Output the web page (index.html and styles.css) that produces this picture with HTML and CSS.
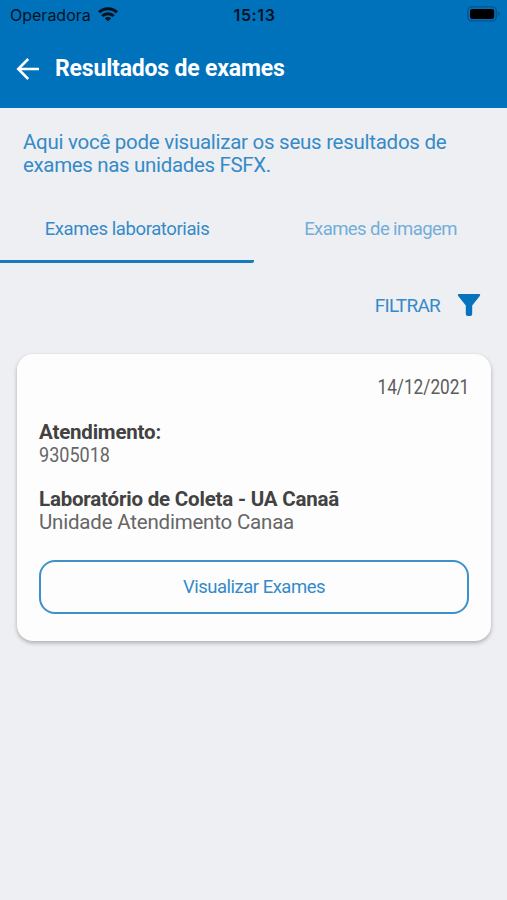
FILE: index.html
```html
<!DOCTYPE html>
<html lang="pt-BR">
<head>
<meta charset="utf-8">
<title>Resultados de exames</title>
<link rel="stylesheet" href="styles.css">
</head>
<body>
<header class="header">
  <div class="status">
    <div class="carrier"><span class="carrier-name">Operadora</span>
      <svg class="wifi" width="20" height="15" viewBox="0 0 20 15" fill="none" stroke="#03121f" stroke-width="3"><path d="M1 5.4a13 13 0 0 1 18 0M4.2 9a8.4 8.4 0 0 1 11.6 0"/><path d="M10 14.3 6.8 11.4a4.6 4.6 0 0 1 6.4 0Z" fill="#03121f" stroke="none"/></svg>
    </div>
    <time class="clock">15:13</time>
    <svg class="battery" width="34" height="16" viewBox="0 0 34 16"><rect x=".9" y=".9" width="28.4" height="14" rx="4" fill="none" stroke="#07538a" stroke-width="1.4"/><rect x="3" y="3" width="24.2" height="10" rx="2.2" fill="#000"/><path d="M31 5.5c2 .6 2 4.4 0 5z" fill="#07538a"/></svg>
  </div>
  <div class="titlebar">
    <svg width="24" height="24" viewBox="0 0 24 24" fill="none" stroke="#fff" stroke-width="2.5"><path d="M23 12H2.5M12.2 2 2.2 12l10 10"/></svg>
    <h1 class="title">Resultados de exames</h1>
  </div>
</header>
<main>
  <p class="intro"><span class="intro-a">Aqui você pode visualizar os seus resultados de</span><br><span class="intro-b">exames nas unidades FSFX.</span></p>
  <nav class="tabs">
    <div class="tab active"><span class="tab-a">Exames laboratoriais</span></div>
    <div class="tab"><span class="tab-b">Exames de imagem</span></div>
  </nav>
  <div class="filter"><span class="filter-label">FILTRAR</span>
    <svg width="24" height="24" viewBox="0 0 24 24" fill="#0873bd"><path d="M2 1H22Q24 1.4 22.6 3.2L15.2 12.6V21Q15.2 23 13.2 23H10.8Q8.8 23 8.8 21V12.6L1.4 3.2Q0 1.4 2 1Z"/></svg>
  </div>
  <section class="card">
    <time class="date">14/12/2021</time>
    <h2 class="label">Atendimento:</h2>
    <p class="value number">9305018</p>
    <h2 class="label">Laboratório de Coleta - UA Canaã</h2>
    <p class="value">Unidade Atendimento Canaa</p>
    <button class="button">Visualizar Exames</button>
  </section>
</main>
</body>
</html>
```
FILE: styles.css
```css
* { box-sizing: border-box; }
body { margin: 0; width: 507px; height: 900px; overflow: hidden; background: #eeeff3; color: #666; font-family: Roboto, sans-serif; white-space: nowrap; }
h1, h2, p { margin: 0; }
svg { display: block; flex: none; }
.header { height: 108px; background: #0072bc; }
.status { height: 30px; display: grid; grid-template-columns: 1fr auto 1fr; align-items: center; padding: 0 6px 0 8px; color: #03121f; font-family: Inter, sans-serif; }
.carrier { display: flex; align-items: center; gap: 7px; padding-left: 2px; font-size: 16px; }
.wifi { margin-bottom: 2px; }
.clock { font-size: 16px; font-weight: 600; letter-spacing: .6px; }
.battery { justify-self: end; margin-bottom: 2px; }
.titlebar { height: 77px; display: flex; align-items: center; gap: 15px; padding-left: 16px; color: #fff; }
.title { padding-top: 1px; font-size: 23px; line-height: 28px; font-weight: 700; letter-spacing: -.18px; }
.intro { padding: 23px 0 0 23px; font-size: 20.5px; line-height: 23px; color: #358ac7; }
.intro-a { letter-spacing: -.27px; }
.intro-b { letter-spacing: -.34px; }
.tabs { display: grid; grid-template-columns: 254px 253px; height: 70px; margin-top: 16px; }
.tab { height: 70px; padding-top: 24px; border-bottom: 3px solid transparent; text-align: center; font-size: 18.5px; line-height: 24px; color: #72aed8; }
.active { color: #358ac7; border-bottom-color: #1979be; border-radius: 0 0 2px 0; }
.tab-a { letter-spacing: -.4px; }
.tab-b { letter-spacing: -.58px; }
.filter { display: flex; align-items: center; justify-content: flex-end; gap: 17px; height: 24px; margin: 30px 26px 0 0; font-size: 19px; color: #358ac7; letter-spacing: -.75px; }
.card { display: flex; flex-direction: column; margin: 37px 16px 0 17px; height: 287px; padding: 22px 22px 27px; border-radius: 16px; background: #fdfdfd; box-shadow: 0 2px 4px rgba(0,0,0,.28); font-size: 20.5px; line-height: 23px; }
.date { align-self: flex-end; color: #5c5c5c; transform: scaleX(.84); transform-origin: right; }
.label { margin-top: 22px; font-size: 20.5px; line-height: 23px; font-weight: 700; letter-spacing: -.2px; color: #424242; }
.value { line-height: 22px; letter-spacing: -.2px; }
.number { letter-spacing: 0; transform: scaleX(.88); transform-origin: left; }
.button { height: 54px; margin-top: auto; padding: 0; border: 2px solid #3d90c9; border-radius: 16px; background: transparent; color: #358ac7; font: 18.5px/24px Roboto, sans-serif; letter-spacing: -.5px; }
```
